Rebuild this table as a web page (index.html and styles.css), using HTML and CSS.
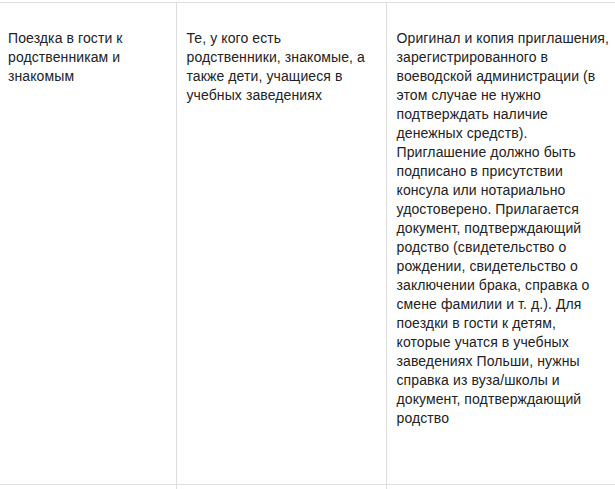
FILE: index.html
```html
<!DOCTYPE html>
<html lang="ru">
<head>
<meta charset="utf-8">
<title>Поездка в гости</title>
<link rel="stylesheet" href="styles.css">
</head>
<body>
<table class="visa-table">
  <colgroup>
    <col class="c1">
    <col class="c2">
    <col class="c3">
  </colgroup>
  <tbody>
    <tr>
      <td class="cell first">Поездка в гости к<br>родственникам и<br>знакомым</td>
      <td class="cell">Те, у кого есть<br>родственники, знакомые, а<br>также дети, учащиеся в<br>учебных заведениях</td>
      <td class="cell">Оригинал и копия приглашения,<br>зарегистрированного в<br>воеводской администрации (в<br>этом случае не нужно<br>подтверждать наличие<br>денежных средств).<br>Приглашение должно быть<br>подписано в присутствии<br>консула или нотариально<br>удостоверено. Прилагается<br>документ, подтверждающий<br>родство (свидетельство о<br>рождении, свидетельство о<br>заключении брака, справка о<br>смене фамилии и т. д.). Для<br>поездки в гости к детям,<br>которые учатся в учебных<br>заведениях Польши, нужны<br>справка из вуза/школы и<br>документ, подтверждающий<br>родство</td>
    </tr>
    <tr>
      <td class="cell first"></td>
      <td class="cell"></td>
      <td class="cell"></td>
    </tr>
  </tbody>
</table>
</body>
</html>
```
FILE: styles.css
```css
html, body {
  margin: 0;
  padding: 0;
  background: #fff;
  overflow: hidden;
}
body {
  font-family: "Liberation Sans", Arial, sans-serif;
  font-size: 14px;
  line-height: 19px;
  letter-spacing: 0.1px;
  color: #222;
}
.visa-table {
  margin-top: 2px;
  border-collapse: collapse;
  table-layout: fixed;
  width: 640px;
}
.c1 { width: 176px; }
.c2 { width: 210px; }
.c3 { width: 254px; }
.cell {
  vertical-align: top;
  padding: 26px 10px 56px 10px;
  border-top: 1px solid #dedede;
  border-left: 1px solid #dedede;
  white-space: nowrap;
}
.cell.first {
  border-left: none;
  padding-left: 8px;
}
```
